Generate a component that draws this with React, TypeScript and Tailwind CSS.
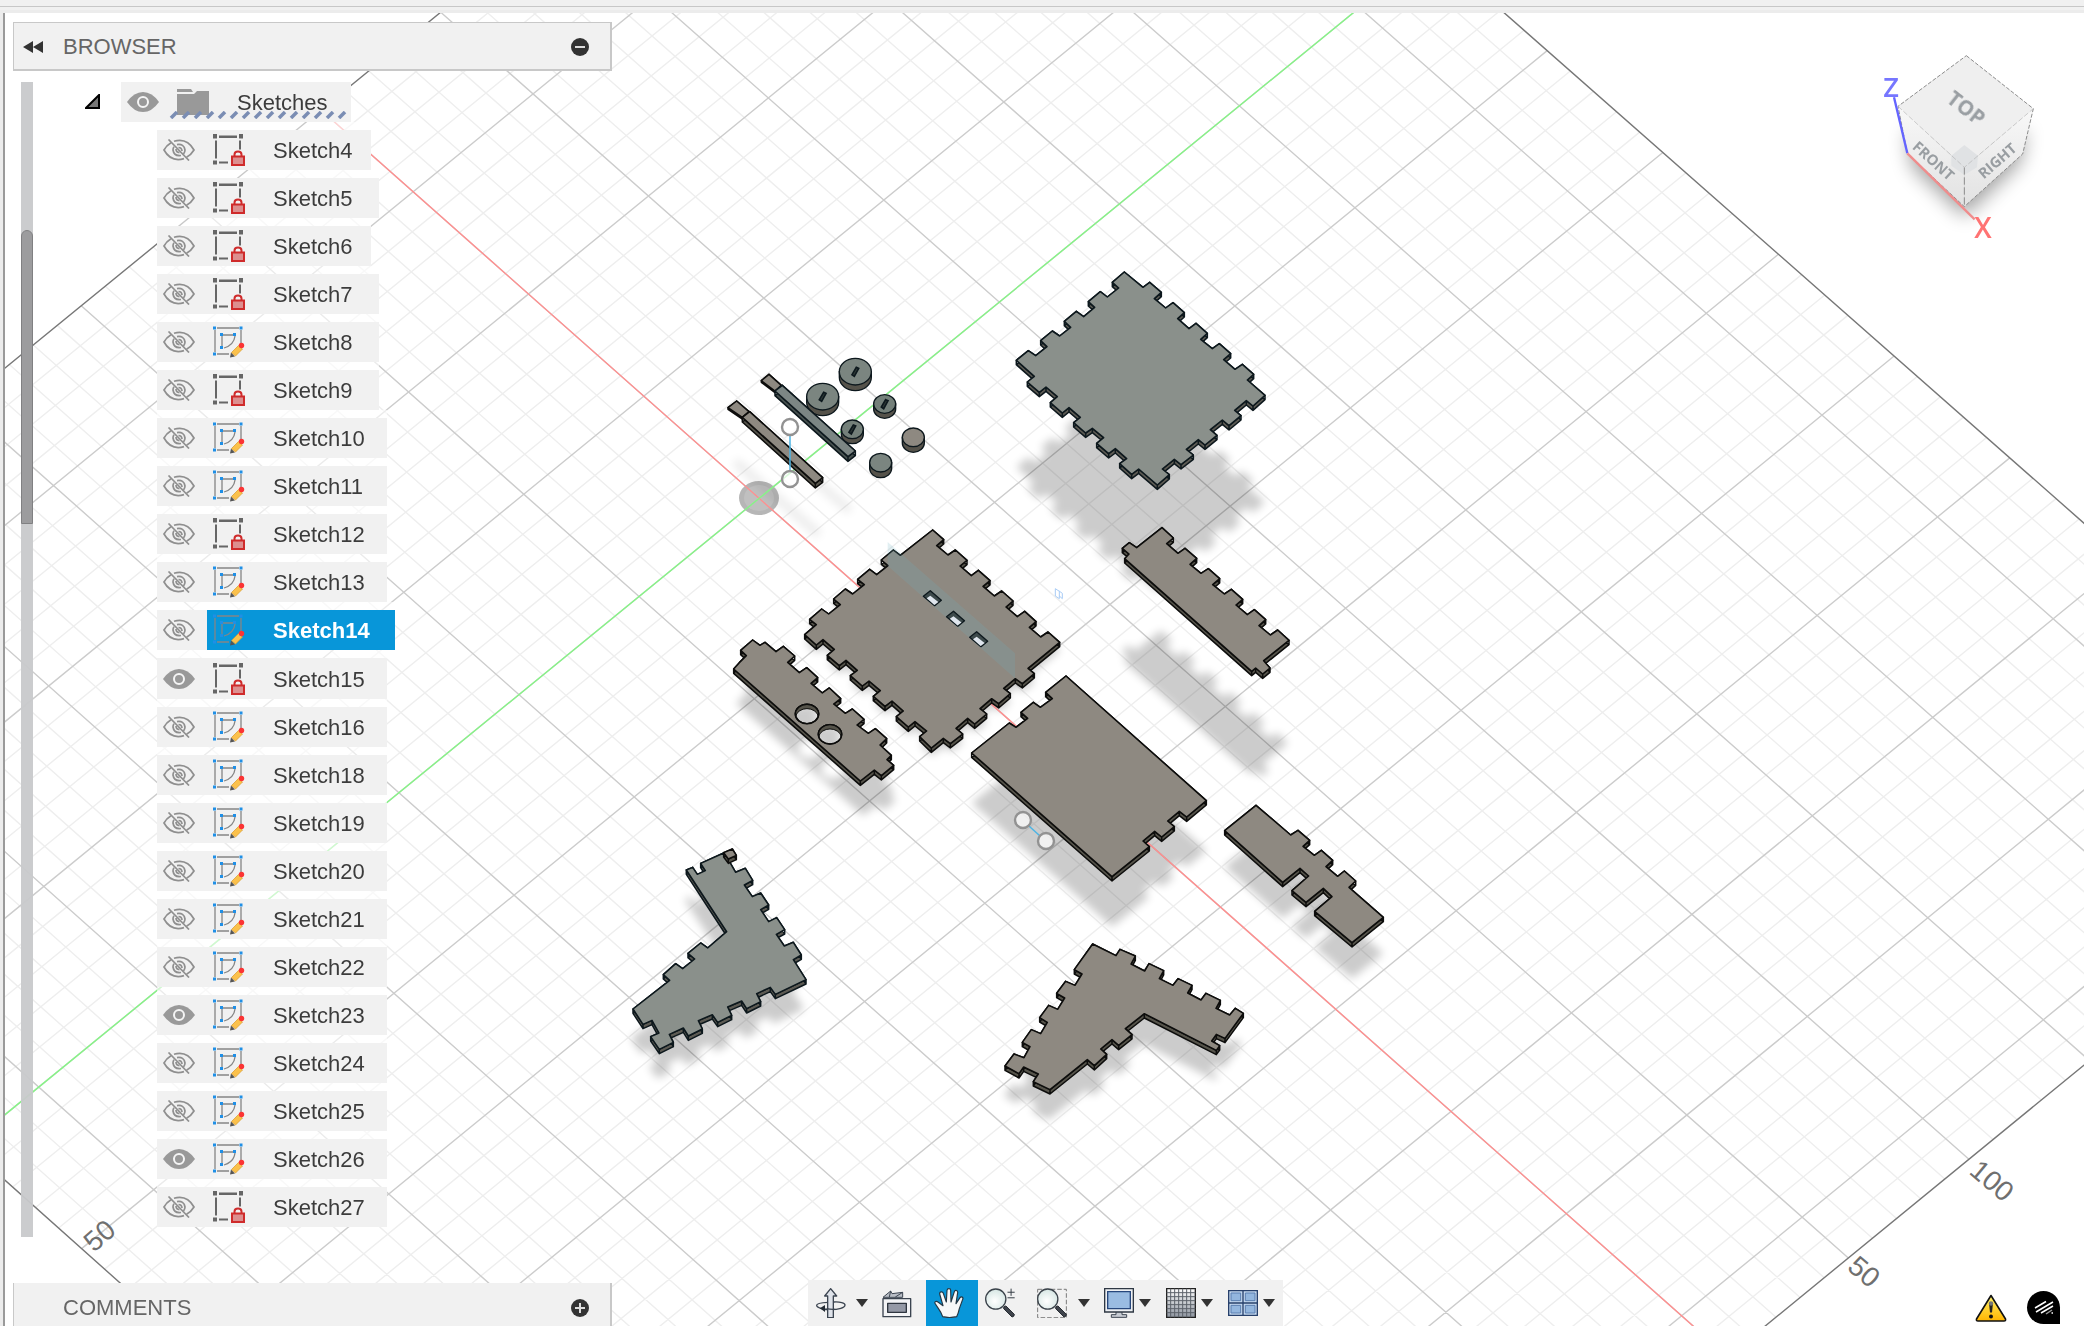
import React from "react";

type Pt = [number, number];

/* ---------- geometry helpers ---------- */

const parse = (s: string): Pt[] =>
  s
    .trim()
    .split(/\s+/)
    .map((p) => p.split(",").map(Number) as Pt);

const toPath = (pts: Pt[]) => "M" + pts.map((p) => p.join(" ")).join("L") + "Z";

const LEFT: Pt = [-470, 756];
const TOP: Pt = [992, -438];
const RIGHT: Pt = [2403, 804];
const BOTTOM: Pt = [932, 2008];

const U_MIN = -19;
const U_MAX = 42;
const V_MIN = -33;
const V_MAX = 28;

const lerp = (a: Pt, b: Pt, t: number): Pt => [a[0] + (b[0] - a[0]) * t, a[1] + (b[1] - a[1]) * t];

const project = (u: number, v: number): Pt => {
  const a = (u - U_MIN) / (U_MAX - U_MIN);
  const b = (v - V_MIN) / (V_MAX - V_MIN);
  return lerp(lerp(LEFT, TOP, b), lerp(BOTTOM, RIGHT, b), a);
};

const segment = (p: Pt, q: Pt) => `M${p[0]} ${p[1]}L${q[0]} ${q[1]}`;

const gridPaths = () => {
  let minor = "";
  let major = "";
  for (let u = U_MIN + 1; u < U_MAX; u++) {
    const d = segment(project(u, V_MIN), project(u, V_MAX));
    if (u % 5 === 0) major += d;
    else minor += d;
  }
  for (let v = V_MIN + 1; v < V_MAX; v++) {
    const d = segment(project(U_MIN, v), project(U_MAX, v));
    if (v % 5 === 0) major += d;
    else minor += d;
  }
  return { minor, major };
};

/* ---------- parts laid out on the plane ---------- */

type Part = {
  origin: Pt;
  points: string;
  top: string;
  side: string;
  line: string;
  shadow: Pt;
  holes?: string;
};

const BROWN = { top: "#8e8981", side: "#55534a", line: "#0d0d0c" };
const GREY = { top: "#8a908b", side: "#5c5a53", line: "#0d181d" };

const PARTS: Part[] = [
  {
    ...GREY,
    origin: [980, 250],
    shadow: [0, 320],
    points:
      "433,66 489,112 509,97 544,127 523,146 557,174 579,158 613,188 593,206 627,236 648,220 682,250 662,268 697,296 718,281 752,311 731,329 765,358 787,343 821,373 802,390 855,436 819,468 799,452 764,481 783,497 747,527 727,510 691,539 711,556 675,585 655,569 619,598 640,615 603,644 583,628 547,657 568,674 532,705 476,657 455,673 419,641 440,626 406,596 386,611 350,580 371,563 337,535 317,549 281,518 301,502 267,473 247,489 211,458 232,440 198,411 178,427 142,396 163,379 109,331 145,302 167,317 201,290 182,272 217,243 239,258 272,232 253,214 289,184 311,200 344,172 325,155 361,125 382,141 416,114 397,97",
  },
  {
    ...BROWN,
    origin: [720, 510],
    shadow: [2, 24],
    points:
      "638,60 671,89 650,107 684,135 706,120 741,151 720,168 754,197 775,181 810,212 789,229 823,258 845,243 879,273 858,291 892,320 914,304 948,335 928,352 962,381 984,366 1019,397 924,475 943,491 907,521 886,506 851,535 871,551 836,581 815,566 780,596 800,612 764,642 743,625 708,655 728,672 691,701 670,685 634,714 599,680 620,663 585,635 565,651 529,620 550,603 516,573 495,589 460,559 481,542 447,513 427,528 391,497 412,481 378,451 358,467 322,436 343,418 309,389 289,405 254,374 289,344 269,328 305,297 326,312 361,284 341,267 376,237 398,252 433,224 413,208 449,178 470,194 504,167 484,150 520,120 541,136",
  },
  {
    ...BROWN,
    origin: [720, 510],
    shadow: [8, 104],
    points:
      "98,390 120,406 135,397 168,425 190,409 224,438 203,457 238,488 260,473 293,503 273,520 307,549 328,534 362,566 341,582 376,610 397,597 432,628 411,645 445,670 466,656 500,686 480,705 514,736 501,749 521,766 484,797 463,780 421,813 41,477 58,458 79,437 62,421",
    holes:
      "M226 612a35 29 0 1 0 70 0a35 29 0 1 0 -70 0ZM295 673a35 29 0 1 0 70 0a35 29 0 1 0 -70 0Z",
  },
  {
    ...BROWN,
    origin: [940, 510],
    shadow: [0, 150],
    points:
      "378,498 799,872 740,921 718,904 683,933 703,950 665,981 644,964 609,993 628,1010 516,1100 95,729 208,639 228,652 263,625 243,607 280,577 301,592 337,566 317,547",
  },
  {
    ...BROWN,
    origin: [940, 510],
    shadow: [-3, 308],
    points:
      "666,53 700,84 680,101 714,130 735,115 770,145 750,163 783,190 805,176 839,206 818,224 853,252 874,238 908,268 888,285 922,314 943,299 977,329 957,347 991,375 1013,360 1047,391 971,452 990,474 968,492 947,474 935,484 554,146 567,132 547,115 568,98 590,113",
  },
  {
    ...BROWN,
    origin: [940, 510],
    shadow: [0, 108],
    points:
      "948,886 1052,975 1074,961 1109,991 1089,1009 1123,1036 1144,1021 1178,1051 1158,1070 1193,1099 1213,1083 1247,1113 1227,1132 1330,1222 1236,1298 1124,1204 1176,1160 1150,1135 1098,1177 1056,1142 1106,1098 1080,1075 1028,1117 854,962",
  },
  {
    ...GREY,
    origin: [600, 820],
    shadow: [-6, 88],
    points:
      "302,130 371,99 388,124 407,157 436,145 458,181 433,195 457,230 482,219 506,255 482,269 506,305 530,293 554,329 529,343 553,378 580,367 604,405 580,419 618,479 526,523 511,502 470,521 482,545 440,566 425,543 383,561 395,586 353,607 337,584 295,602 307,627 265,648 250,624 208,643 220,667 178,688 152,650 177,639 156,601 129,613 99,567 209,481 190,464 227,431 248,446 284,417 264,400 302,369 323,384 380,335 259,150 278,142 292,163 316,152",
  },
  {
    ...BROWN,
    origin: [980, 920],
    shadow: [-4, 90],
    points:
      "338,72 408,107 420,88 466,108 453,132 494,153 507,131 551,152 538,176 579,196 594,176 636,196 623,219 663,240 678,220 721,241 708,265 749,285 766,265 790,280 735,355 709,343 695,363 719,377 709,391 493,281 436,326 456,344 416,376 396,359 362,387 380,403 343,437 322,419 210,509 160,485 175,462 131,441 117,461 75,438 102,402 132,413 150,380 127,367 154,329 182,341 202,307 179,293 206,256 233,268 254,234 230,220 257,184 285,196 306,162 283,149",
  },
];

const at = (o: Pt) => `translate(${o[0]} ${o[1]}) scale(0.33333)`;

function Solid({
  points,
  top,
  side,
  line,
  depth = 13,
  holes = "",
}: {
  points: string;
  top: string;
  side: string;
  line: string;
  depth?: number;
  holes?: string;
}) {
  const pts = parse(points);
  const walls = pts
    .map((p, i) => {
      const q = pts[(i + 1) % pts.length];
      return toPath([p, q, [q[0], q[1] + depth], [p[0], p[1] + depth]]);
    })
    .join("");
  return (
    <g stroke={line} strokeWidth={4.6} strokeLinejoin="round">
      <path d={walls} fill={side} fillRule="nonzero" />
      <path d={toPath(pts) + holes} fill={top} fillRule="evenodd" />
    </g>
  );
}

function Disc({ x, y, rx, ry, depth, fill, slot }: { x: number; y: number; rx: number; ry: number; depth: number; fill: string; slot?: boolean }) {
  return (
    <g stroke="#0d181d" strokeWidth={4}>
      <path
        d={`M${x - rx} ${y}v${depth}a${rx} ${ry} 0 0 0 ${2 * rx} 0v${-depth}Z`}
        fill="#55524a"
      />
      <ellipse cx={x} cy={y} rx={rx} ry={ry} fill={fill} />
      {slot && (
        <path
          d={`M${x + 3} ${y - 13}L${x + 10} ${y - 10}L${x - 3} ${y + 14}L${x - 10} ${y + 9}Z`}
          fill="#2e3836"
          strokeWidth={5}
        />
      )}
    </g>
  );
}

function Handle({ x, y }: { x: number; y: number }) {
  return (
    <circle cx={x} cy={y} r={8} fill="#ffffff" fillOpacity={0.7} stroke="#929292" strokeWidth={2.4} />
  );
}

function Scene() {
  const { minor, major } = gridPaths();
  const holes = [0, 1, 2].map((i) => [i * 69.5, i * 61.5] as Pt);
  return (
    <svg
      className="absolute inset-0 h-full w-full"
      viewBox="0 0 2084 1326"
      preserveAspectRatio="xMinYMin slice"
      aria-label="Model canvas"
    >
      <defs>
        <filter id="soft" x="-20%" y="-20%" width="140%" height="140%">
          <feGaussianBlur stdDeviation="4" />
        </filter>
      </defs>

      <path d={minor} stroke="#eeeeee" strokeWidth={1.4} />
      <path d={major} stroke="#cccccc" strokeWidth={1.4} />
      <path d={toPath([LEFT, TOP, RIGHT, BOTTOM])} fill="none" stroke="#777777" strokeWidth={1.4} />

      <g fill="#6f6f6f" fontFamily="Liberation Sans, sans-serif" fontSize={28}>
        <text transform="translate(94 1253) rotate(-41)">50</text>
        <text transform="translate(1968 1173) rotate(40)">100</text>
        <text transform="translate(1846 1269) rotate(40)">50</text>
      </g>

      <ellipse cx={759} cy={498} rx={20} ry={17} fill="#b6b6b6" />
      <ellipse cx={759} cy={498} rx={15} ry={13} fill="#c0c0c0" />

      <g fill="#000000" opacity={0.2} filter="url(#soft)">
        {PARTS.map((p, i) => (
          <path
            key={i}
            transform={at(p.origin) + ` translate(${p.shadow[0]} ${p.shadow[1]})`}
            d={toPath(parse(p.points)) + (p.holes ?? "")}
            fillRule="evenodd"
          />
        ))}
        <g stroke="#000000" strokeOpacity={0.35} strokeWidth={10} strokeLinecap="round">
          <path d="M738 464L816 532" />
          <path d="M820 485L847 508" />
        </g>
      </g>

      <path d={segment(project(U_MIN, 0), project(U_MAX, 0))} stroke="#ff8f8f" strokeWidth={1.4} />
      <path d={segment(project(0, V_MIN), project(0, V_MAX))} stroke="#86f486" strokeWidth={1.4} />

      {PARTS.map((p, i) => (
        <g key={i} transform={at(p.origin)}>
          <Solid points={p.points} top={p.top} side={p.side} line={p.line} holes={p.holes} />
        </g>
      ))}

      {/* end cap of the grey bracket */}
      <g transform={at([600, 820])}>
        <Solid points="371,98 397,87 409,106 385,117" top="#8e8981" side="#55534a" line="#0d0d0c" />
      </g>

      {/* openings, construction plane */}
      <g transform={at([720, 510])}>
        <path d="M503 96L885 430V505L503 167Z" fill="#6fb0c0" fillOpacity={0.2} />
        {holes.map(([dx, dy]) => (
          <g key={dx} transform={`translate(${dx} ${dy})`} strokeLinejoin="round">
            <path d="M631 242L664 271L644 287L610 259Z" fill="#3d4a4b" stroke="#0d181d" strokeWidth={4} />
            <path d="M631 257L655 276L643 285L620 265Z" fill="#dfe6ee" />
          </g>
        ))}
        {[[261, 612], [330, 673]].map(([x, y]) => (
          <g key={x}>
            <path
              d={`M${x - 34} ${y + 6}A35 29 0 1 1 ${x + 34} ${y + 6}A35 29 0 0 0 ${x - 34} ${y + 6}Z`}
              fill="#55534a"
              stroke="#0d0d0c"
              strokeWidth={3}
            />
            <ellipse cx={x} cy={y} rx={35} ry={29} fill="none" stroke="#0d0d0c" strokeWidth={4} />
          </g>
        ))}
        <path d="M1006 236l12 8v22l-12 -8ZM1016 242l11 8v16l-9 -8" fill="none" stroke="#a9ccf5" strokeWidth={3} />
      </g>

      {/* dowels and wheels */}
      <g transform={at([700, 330])}>
        <Disc x={466} y={125} rx={48} ry={40} depth={17} fill="#7b8580" slot />
        <Disc x={368} y={200} rx={48} ry={40} depth={17} fill="#7b8580" slot />
        <Disc x={554} y={222} rx={33} ry={28} depth={15} fill="#74807a" slot />
        <Disc x={457} y={298} rx={33} ry={28} depth={15} fill="#74807a" slot />
        <Disc x={640} y={322} rx={33} ry={28} depth={17} fill="#8e8981" />
        <Disc x={542} y={398} rx={33} ry={28} depth={17} fill="#7b8580" />
        <Solid points="84,233 110,213 147,245 127,262" {...BROWN} depth={5} />
        <Solid points="127,262 149,245 368,443 346,460" {...BROWN} depth={14} />
        <Solid points="184,152 207,133 244,166 225,183" {...BROWN} depth={5} />
        <Solid points="225,183 247,166 466,363 444,380" top="#7c8684" side="#46504e" line="#0d181d" depth={14} />
      </g>

      <g stroke="#4db4e4" strokeWidth={1.5}>
        <path d="M790 435V472" />
        <path d="M1029 826L1040 836" />
      </g>
      <Handle x={790} y={427} />
      <Handle x={790} y={479} />
      <Handle x={1023} y={820} />
      <Handle x={1046} y={841} />
    </svg>
  );
}

/* ---------- view cube ---------- */

function ViewCube() {
  return (
    <svg className="mt-[7px] h-60 w-[244px]" viewBox="0 0 732 720" aria-label="View cube">
      <defs>
        <filter id="cubeShadow" x="-40%" y="-40%" width="180%" height="180%">
          <feGaussianBlur stdDeviation="28" />
        </filter>
        <linearGradient id="cubeSide" x1="0" y1="0" x2="0" y2="1">
          <stop offset="0" stopColor="#f8f8f8" />
          <stop offset="1" stopColor="#e2e2e2" />
        </linearGradient>
      </defs>
      <path d="M200 330L373 400L560 330L540 430L373 590L215 440Z" fill="#000" opacity=".36" filter="url(#cubeShadow)" />
      <path d="M174 259L373 442V560L202 400Z" fill="url(#cubeSide)" />
      <path d="M373 442L580 266L548 402L373 560Z" fill="url(#cubeSide)" />
      <path d="M379 107L580 266L373 442L174 259Z" fill="#efefef" />
      <path d="M373 375L414 407L411 442L373 465L334 437L334 407Z" fill="#e0e2e4" />
      <g fill="none" stroke="#8c8c8c" strokeWidth="3" strokeDasharray="12 5">
        <path d="M379 107L580 266L548 402L373 560L202 400L174 259Z" />
        <path d="M373 442V560" strokeDasharray="22 8" />
      </g>
      <path d="M174 259L373 442L580 266" fill="none" stroke="#b5b5b5" strokeWidth="2" strokeDasharray="16 6" />
      <path d="M162 232L202 400" stroke="#6464ff" strokeWidth="7" />
      <path d="M202 400L404 598" stroke="#f08c8c" strokeWidth="7" />
      <g fontFamily="Open Sans, sans-serif" textAnchor="middle">
        <g fontWeight="700" fill="#999ea2">
          <text transform="translate(365 282) rotate(38)" fontSize="62">TOP</text>
          <text transform="translate(270 434) rotate(42)" fontSize="44">FRONT</text>
          <text transform="translate(482 434) rotate(-41)" fontSize="44">RIGHT</text>
        </g>
        <g fontWeight="600">
          <text x="153" y="231" fontSize="82" fill="#7676ff">Z</text>
          <text x="429" y="655" fontSize="84" fill="#ff7373">X</text>
        </g>
      </g>
    </svg>
  );
}

/* ---------- browser tree ---------- */

function EyeOn() {
  return (
    <svg className="h-5 w-8" viewBox="0 0 32 20">
      <path d="M0 10Q7 0 16 0T32 10Q25 20 16 20T0 10Z" fill="#999" />
      <ellipse cx="16" cy="10" rx="5" ry="5" fill="none" stroke="#f5f5f5" strokeWidth="2" />
    </svg>
  );
}

function EyeOff() {
  return (
    <svg className="h-[22px] w-8" viewBox="0 0 32 22" fill="none" stroke="#8f8f8f" strokeWidth="1.7">
      <path d="M11 2.3Q24 -1.5 31 11Q28 16 23.5 18.2M21 19.6Q8 23.5 1 11Q3.500 6.500 8 3.800" />
      <path d="M14 5.600Q21 4.500 22 11Q22 13 20.500 15M18 16.500Q11 17.500 10 11Q10 9 11 7.800" />
      <path d="M15.500 8.500Q18.800 8.500 19 12M13 10Q13 13.300 16.500 13.600" />
      <path d="M5.500 .5L26 21.500" />
    </svg>
  );
}

function SketchIcon() {
  return (
    <svg className="h-8 w-8" viewBox="0 0 32 32">
      <g fill="none" stroke="#858585" strokeWidth="1.3">
        <path d="M4 2H26M2 4V26M28 4V19M4 28H16M9 9H21M9 9V21M22 10Q21 19 11 22" />
      </g>
      <g fill="#1f8fe6">
        <path d="M0 .5h3v3h-3zM26.500 .5h3v3h-3zM0 26.500h3v3h-3zM7 7h3v3h-3zM20 7h3v3h-3zM7 20h3v3h-3z" />
      </g>
      <path d="M17 31.500L18 26.500L22 30.500Z" fill="#555" />
      <path d="M18.500 26.500L25.500 19.500L29.500 23L22.500 30Z" fill="#fbc14b" stroke="#d99a2a" strokeWidth=".7" />
      <circle cx="28.500" cy="19.500" r="2.700" fill="#fb3434" />
    </svg>
  );
}

function LockedSketchIcon() {
  return (
    <svg className="h-8 w-8" viewBox="0 0 32 32">
      <g fill="#666">
        <path d="M0 0h4v4.500h-4zM26 0h4v4.500h-4zM0 26.500h4v4h-4zM6 1.500h18v2.500h-18zM2 6.500h2v18h-2zM26 6.500h2v9h-2zM6 27.500h9v2h-9z" />
      </g>
      <path d="M21.500 22V20.500Q21.500 17.500 25 17.500T28.500 20.500V22" fill="none" stroke="#cf2b2b" strokeWidth="2" />
      <path d="M19 22.500h12v8.500h-12z" fill="#dd8f8f" stroke="#cf2b2b" strokeWidth="2" />
    </svg>
  );
}

type Item = { name: string; locked?: boolean; visible?: boolean; selected?: boolean; width: string; height?: string };

const N = "w-[214px]";
const M = "w-[222px]";
const W = "w-[230px]";

const ITEMS: Item[] = [
  { name: "Sketch4", locked: true, width: N },
  { name: "Sketch5", locked: true, width: M },
  { name: "Sketch6", locked: true, width: N },
  { name: "Sketch7", locked: true, width: M },
  { name: "Sketch8", width: M },
  { name: "Sketch9", locked: true, width: M },
  { name: "Sketch10", width: W },
  { name: "Sketch11", width: W },
  { name: "Sketch12", locked: true, width: W },
  { name: "Sketch13", width: W },
  { name: "Sketch14", selected: true, width: "w-[238px]" },
  { name: "Sketch15", locked: true, visible: true, width: W, height: "h-[41px]" },
  { name: "Sketch16", width: W },
  { name: "Sketch18", width: W },
  { name: "Sketch19", width: W },
  { name: "Sketch20", width: W },
  { name: "Sketch21", width: W },
  { name: "Sketch22", width: W },
  { name: "Sketch23", visible: true, width: W },
  { name: "Sketch24", width: W },
  { name: "Sketch25", width: W },
  { name: "Sketch26", visible: true, width: W },
  { name: "Sketch27", locked: true, width: W },
];

function TreeRow({ item }: { item: Item }) {
  return (
    <li
      className={`flex bg-[#f1f1f1] shadow-[0_-8px_0_rgb(255_255_255/0.6)] ${item.height ?? "h-10"} ${item.width}`}
    >
      <button aria-label={`Toggle ${item.name}`} className="flex w-[50px] items-center pl-1.5">
        {item.visible ? <EyeOn /> : <EyeOff />}
      </button>
      <button
        className={`flex flex-1 items-center gap-7 pl-1.5 ${
          item.selected ? "bg-[#0896d9] font-bold text-white" : "text-[#3c3c3c]"
        }`}
      >
        {item.locked ? <LockedSketchIcon /> : <SketchIcon />}
        <span className="pt-0.5">{item.name}</span>
      </button>
    </li>
  );
}

function RoundIcon({ plus }: { plus?: boolean }) {
  return (
    <svg className="h-5 w-5" viewBox="0 0 20 20">
      <circle cx="10" cy="10" r="9" fill="#333" />
      <path d={plus ? "M5 10H15M10 5V15" : "M5 10H15"} stroke="#ddd" strokeWidth="2" />
    </svg>
  );
}

function BrowserPanel() {
  return (
    <aside className="flex h-full w-[599px] flex-col pt-[9px]">
      <header className="flex h-[49px] shrink-0 items-center border border-r-2 border-b-2 border-[#c8c8c8] bg-[#f1f1f1] pt-0.5 pr-5 pl-2">
        <button aria-label="Collapse" className="w-[41px]">
          <svg className="h-3 w-[22px]" viewBox="0 0 22 12">
            <path d="M11 0V12L1 6ZM21 0V12L11 6Z" fill="#333" />
          </svg>
        </button>
        <h2 className="flex-1 text-[#666]">BROWSER</h2>
        <button aria-label="Minimize">
          <RoundIcon />
        </button>
      </header>

      <div className="mt-[11px] flex h-[1155px] pl-2">
        <div role="scrollbar" aria-controls="tree" aria-valuenow={20} className="h-full w-3 bg-[#c8c9cb]/95 pt-[148px]">
          <div className="h-[294px] rounded-t-md border border-[#808082] bg-[#9c9c9e]" />
        </div>
        <div id="tree" className="pl-[52px]">
          <div className="flex items-center">
            <svg className="h-4 w-4" viewBox="0 0 16 16">
              <path d="M14 1V14H1Z" fill="#777" stroke="#000" strokeWidth="2" />
            </svg>
            <div className="relative ml-5 flex h-10 w-[230px] items-center bg-[#f1f1f1] pl-1.5">
              <button aria-label="Toggle Sketches">
                <EyeOn />
              </button>
              <svg className="ml-[18px] h-[26px] w-8" viewBox="0 0 32 26" fill="#999">
                <path d="M0 0H14L16 3H0ZM0 5H17L20 2H32V26H0Z" />
              </svg>
              <span className="ml-7 pt-0.5 text-[#3c3c3c]">Sketches</span>
              <svg className="absolute bottom-[3px] left-12 h-2 w-[180px]" viewBox="0 0 180 8">
                {Array.from({ length: 15 }, (_, i) => (
                  <path key={i} d={`M${i * 12 + 2} 7L${i * 12 + 8} 1`} stroke="#7a8db3" strokeWidth="3.500" />
                ))}
              </svg>
            </div>
          </div>
          <ul className="mt-2 ml-[72px] flex w-fit flex-col gap-2">
            {ITEMS.map((item) => (
              <TreeRow key={item.name} item={item} />
            ))}
          </ul>
        </div>
      </div>

      <footer className="mt-auto flex h-[43px] shrink-0 items-center border-r-2 border-l border-[#c8c8c8] bg-[#f1f1f1] pt-1.5 pr-5 pl-[49px]">
        <h2 className="flex-1 text-[#666]">COMMENTS</h2>
        <button aria-label="Add comment">
          <RoundIcon plus />
        </button>
      </footer>
    </aside>
  );
}

/* ---------- navigation toolbar ---------- */

function Caret() {
  return (
    <svg className="h-2 w-3" viewBox="0 0 12 8">
      <path d="M0 0H12L6 8Z" fill="#333" />
    </svg>
  );
}

const iconBox = "h-[30px] w-[30px]";

function OrbitIcon() {
  return (
    <svg className={iconBox} viewBox="0 0 90 90" strokeLinejoin="round">
      <path d="M36 43C12 44 2 48 2 52C2 60 24 65 44 65C68 65 87 59 87 51C87 45 72 41 54 42" fill="none" stroke="#3b4450" strokeWidth="4" />
      <path d="M35 89V24H26L44 2L62 24H52V89Z" fill="#dfe3ea" stroke="#3b4450" strokeWidth="4" />
      <path d="M32 62Q44 65 58 64" stroke="#3b4450" strokeWidth="4" fill="none" />
      <path d="M12 61L27 51V72Z" fill="#222a33" />
    </svg>
  );
}

function LookAtIcon() {
  return (
    <svg className={iconBox} viewBox="0 0 90 90" strokeLinejoin="round">
      <path d="M3 28L26 9L30 17L62 13V28Z" fill="#b9bec6" stroke="#3b4450" strokeWidth="3" />
      <path d="M26 9L22 27M62 13L40 27" stroke="#3b4450" strokeWidth="3" />
      <path d="M3 32H86V86H3Z" fill="#f3f4f6" stroke="#3b4450" strokeWidth="4" />
      <path d="M17 46H73V73H17Z" fill="#9499a6" stroke="#2f3640" strokeWidth="4" />
    </svg>
  );
}

function HandIcon() {
  return (
    <svg className={iconBox} viewBox="0 0 90 90" strokeLinejoin="round">
      <path
        d="M26 86C20 68 12 62 3 46C1 41 7 38 12 42L27 53L17 18C16 11 25 9 28 16L37 42L39 7C40 0 50 0 50 7L51 42L61 11C63 5 72 7 71 14L66 47L78 29C82 24 89 28 86 34L76 62C74 72 72 78 68 86Q46 91 26 86Z"
        fill="#f7f8f8"
        stroke="#243744"
        strokeWidth="3.500"
      />
    </svg>
  );
}

function Lens() {
  return (
    <>
      <path d="M58 58L64 55L90 81Q90 88 83 89L57 63Z" fill="#3f444c" stroke="#1f252b" strokeWidth="3" />
      <circle cx="33" cy="34" r="31" fill="url(#lens)" stroke="#3a424a" strokeWidth="4" />
    </>
  );
}

function ZoomIcon() {
  return (
    <svg className={iconBox} viewBox="0 0 92 92">
      <defs>
        <radialGradient id="lens" cx=".45" cy=".6" r=".7">
          <stop offset="0" stopColor="#ffffff" />
          <stop offset="1" stopColor="#cfe2df" />
        </radialGradient>
      </defs>
      <Lens />
      <path d="M69 13H91M80 2V24M69 30H91" stroke="#333b44" strokeWidth="3" />
    </svg>
  );
}

function ZoomWindowIcon() {
  return (
    <svg className={iconBox} viewBox="0 0 92 92">
      <path d="M2 4H90V91H2Z" fill="none" stroke="#777" strokeWidth="3" strokeDasharray="14 6" />
      <Lens />
    </svg>
  );
}

function DisplayIcon() {
  return (
    <svg className={iconBox} viewBox="0 0 90 90">
      <path d="M36 70H54V80H68V88H22V80H36Z" fill="#c9cdd4" stroke="#3b4450" strokeWidth="3" />
      <path d="M2 2H88V72H2Z" fill="#eef0f3" stroke="#2f3844" strokeWidth="4" />
      <path d="M11 11H79V62H11Z" fill="#9abce2" stroke="#27477c" strokeWidth="4" />
    </svg>
  );
}

function GridIcon() {
  const lines = [14, 26, 38, 50, 62, 74].map((p) => `M${p} 2V88M2 ${p}H88`).join("");
  return (
    <svg className={iconBox} viewBox="0 0 90 90">
      <defs>
        <linearGradient id="gridFade" x1="0" y1="0" x2="0" y2="1">
          <stop offset="0" stopColor="#ffffff" />
          <stop offset="1" stopColor="#8d949f" />
        </linearGradient>
      </defs>
      <path d="M2 2H88V88H2Z" fill="url(#gridFade)" stroke="#222" strokeWidth="4" />
      <path d={lines} stroke="#5c626a" strokeWidth="3" />
    </svg>
  );
}

function ViewportsIcon() {
  return (
    <svg className={iconBox} viewBox="0 0 90 90">
      <path d="M2 8H88V82H2Z" fill="#c4d8ef" stroke="#27406b" strokeWidth="4" />
      <g fill="#93b6de" stroke="#5b7fb0" strokeWidth="3">
        <path d="M9 15H38V38H9ZM52 15H81V38H52ZM9 52H38V75H9ZM52 52H81V75H52Z" />
      </g>
      <path d="M45 8V82M2 45H88" stroke="#27406b" strokeWidth="4" />
    </svg>
  );
}

function Toolbar() {
  return (
    <nav aria-label="Navigation" className="ml-0.5 flex h-[46px] bg-[#f1f1f1] pr-2">
      <button aria-label="Orbit" className="flex items-center gap-2.5 pl-2">
        <OrbitIcon />
        <Caret />
      </button>
      <button aria-label="Look at" className="flex w-[58px] items-center justify-center">
        <LookAtIcon />
      </button>
      <button aria-label="Pan" className="flex w-[52px] items-center bg-[#0896d9] pl-2">
        <HandIcon />
      </button>
      <button aria-label="Zoom" className="flex w-[52px] items-center pl-[7px]">
        <ZoomIcon />
      </button>
      <button aria-label="Zoom window" className="flex items-center gap-[11px] pl-[7px]">
        <ZoomWindowIcon />
        <Caret />
      </button>
      <button aria-label="Display settings" className="flex items-center gap-[5px] pl-3.5">
        <DisplayIcon />
        <Caret />
      </button>
      <button aria-label="Grid and snaps" className="flex items-center gap-[5px] pl-[15px]">
        <GridIcon />
        <Caret />
      </button>
      <button aria-label="Viewports" className="flex items-center gap-[5px] pl-[15px]">
        <ViewportsIcon />
        <Caret />
      </button>
    </nav>
  );
}

function StatusIcons() {
  return (
    <div className="mr-6 mb-0.5 flex items-center gap-5">
      <button aria-label="Warnings">
        <svg className="h-7 w-8" viewBox="0 0 32 28">
          <defs>
            <linearGradient id="warn" x1="0" y1="0" x2="0" y2="1">
              <stop offset="0" stopColor="#fff36a" />
              <stop offset="1" stopColor="#ffb400" />
            </linearGradient>
          </defs>
          <path d="M16 1.500L30.500 25Q31 27 29 27H3Q1 27 1.500 25Z" fill="url(#warn)" stroke="#111" strokeWidth="1.600" strokeLinejoin="round" />
          <path d="M14 9Q16 7 18 9L17 18.500H15Z" fill="#222" />
          <circle cx="16" cy="9.500" r="2.200" fill="#777" />
          <circle cx="16" cy="22.500" r="2" fill="#111" />
        </svg>
      </button>
      <button aria-label="Job status" className="flex h-[33px] w-[33px] items-center justify-center rounded-full rounded-br-none bg-black">
        <svg className="h-4 w-5" viewBox="0 0 20 16" stroke="#fff" strokeWidth="1.500">
          <path d="M1 8L12 1.500M2 12L19 2M7 13L19 6" />
          <path d="M12 14L18 10" stroke="#999" />
          <path d="M17.500 13h1.500" />
        </svg>
      </button>
    </div>
  );
}

export default function App() {
  return (
    <div className="relative flex h-screen flex-col overflow-hidden bg-white font-['Liberation_Sans',Arial,sans-serif] text-[22px] leading-6">
      <Scene />
      <div className="relative h-[13px] shrink-0 bg-[#f1f1f1]">
        <div className="h-[7px] border-b border-[#c8c8c8]" />
      </div>
      <main className="relative ml-[3px] grid min-h-0 flex-1 grid-cols-[1fr_auto_1fr] border-l-2 border-[#9a9a9a] outline-[3px] outline-[#ececec]">
        <div className="h-full min-h-0 pl-2">
          <BrowserPanel />
        </div>
        <div className="flex items-end">
          <Toolbar />
        </div>
        <div className="flex flex-col items-end justify-between">
          <ViewCube />
          <StatusIcons />
        </div>
      </main>
    </div>
  );
}
